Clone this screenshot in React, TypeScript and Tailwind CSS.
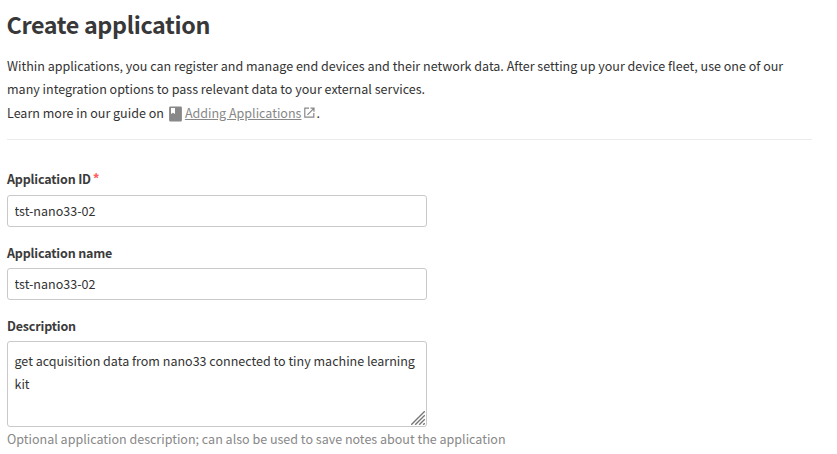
import React from "react";

function BookIcon() {
  return (
    <svg className="mr-[3px] ml-[5px] inline-block h-[16px] w-[13px] align-[-4px]" viewBox="0 0 13 16">
      <path fill="#888" fillRule="evenodd" d="M1.3 0.5h10.4a1.2 1.2 0 0 1 1.2 1.2v12.6a1.2 1.2 0 0 1-1.2 1.2H1.3A1.2 1.2 0 0 1 .1 14.3V1.7A1.2 1.2 0 0 1 1.3 .5ZM2 2v6l2-1.3L6 8V2Z" />
    </svg>
  );
}

function ExternalIcon() {
  return (
    <svg className="mr-[1px] ml-[3px] inline-block h-[11px] w-[11px] align-[0px]" viewBox="0 0 11 11" fill="none" stroke="#888" strokeWidth="1.2">
      <path d="M5 1.2H.8v9h9V6M6.5 1.2h3.5v3.5M9.9 1.3 3.4 7.8" />
    </svg>
  );
}

function Label({ children }: { children: React.ReactNode }) {
  return <label className="block h-[23px] text-[12.5px] leading-[23px] font-bold tracking-[-0.17px] text-[#3b3b3b]">{children}</label>;
}

function Input({ value }: { value: string }) {
  return (
    <input
      className="block h-[32px] w-[420px] rounded-[3px] border border-[#c9c9c9] bg-white pr-[7px] pb-[2px] pl-[6.5px] text-[12.52px] outline-none"
      defaultValue={value}
    />
  );
}

export default function App() {
  return (
    <main className="h-[454px] w-[837px] overflow-hidden bg-white pr-[25px] pl-[7px] font-['Noto_Sans_CJK_SC',sans-serif] text-[12.52px] leading-[23px] text-[#333]">
      <h1 className="-ml-[0.5px] h-[54px] pt-[7px] text-[23.3px] leading-[34px] font-bold tracking-[-0.35px] text-[#383838]">Create application</h1>
      <section className="h-[86px] border-b border-[#ebebeb] whitespace-nowrap">
        <p>Within applications, you can register and manage end devices and their network data. After setting up your device fleet, use one of our</p>
        <p>many integration options to pass relevant data to your external services.</p>
        <p className="mt-px">
          Learn more in our guide on
          <BookIcon />
          <a className="text-[#888] underline">Adding Applications</a>
          <ExternalIcon />.
        </p>
      </section>
      <form className="pt-[27px]">
        <div className="mb-[14px] flex flex-col gap-[5px]">
          <Label>
            Application ID<span className="ml-[2px] text-[13.5px] leading-none text-[#ff5c5c]">*</span>
          </Label>
          <Input value="tst-nano33-02" />
        </div>
        <div className="mb-[14px] flex flex-col gap-[4px]">
          <Label>Application name</Label>
          <Input value="tst-nano33-02" />
        </div>
        <div className="flex flex-col gap-[4px]">
          <Label>Description</Label>
          <div className="relative h-[86px] w-[420px]">
            <textarea
              className="block h-[86px] w-[420px] resize-none rounded-[3px] border border-[#c9c9c9] bg-white pt-[7px] pr-[7px] pl-[6.5px] text-[12.52px] leading-[23px] outline-none"
              defaultValue="get acquisition data from nano33 connected to tiny machine learning kit"
            />
            <svg className="absolute right-[2px] bottom-[2px] h-[14px] w-[14px]" viewBox="0 0 14 14" stroke="#777" strokeWidth="1.4">
              <path d="M.2 13.8 13.8 .2M4.2 13.8l9.6-9.6M8.2 13.8l5.6-5.6M12.2 13.8l1.6-1.6" />
            </svg>
          </div>
        </div>
        <p className="whitespace-nowrap text-[#888]">Optional application description; can also be used to save notes about the application</p>
      </form>
    </main>
  );
}
